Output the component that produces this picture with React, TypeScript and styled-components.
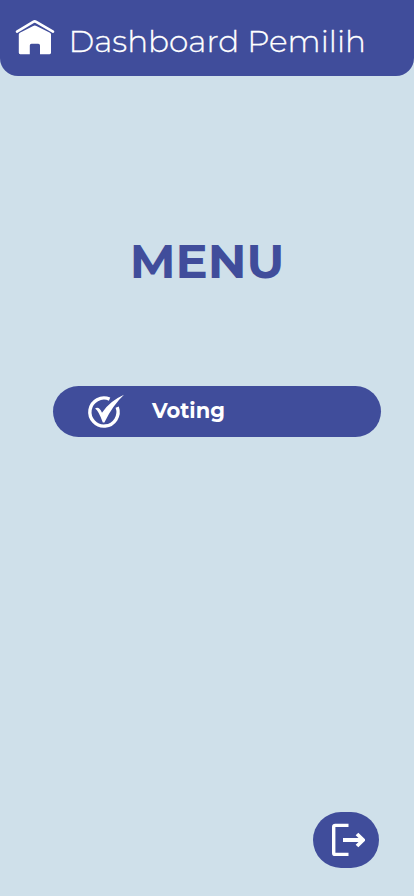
import React from "react";
import styled, { createGlobalStyle } from "styled-components";

const indigo = "#404d9b";
const mist = "#cfe0ea";

const GlobalStyle = createGlobalStyle`
  * { box-sizing: border-box; }
  body { margin: 0; background: ${mist}; font-family: Montserrat, Inter, "Liberation Sans", sans-serif; }
`;

const Screen = styled.main`
  display: flex;
  flex-direction: column;
  height: 896px;
  background: ${mist};
`;

const Header = styled.header`
  display: flex;
  height: 76px;
  padding: 19px 0 0 15px;
  gap: 13.5px;
  border-radius: 0 0 18px 18px;
  background: ${indigo};
  color: #fff;
`;

const HeaderTitle = styled.h1`
  margin: 3px 0 0;
  font-size: 31.1px;
  font-weight: 300;
  line-height: 38px;
  white-space: nowrap;
  -webkit-text-stroke: 0.3px #fff;
`;

const MenuTitle = styled.h2`
  margin: 155px 0 0;
  text-align: center;
  color: ${indigo};
  font-size: 48px;
  font-weight: 700;
  line-height: 60px;
`;

const MenuButton = styled.button`
  display: flex;
  align-items: center;
  width: 328px;
  height: 51px;
  margin: 95px 0 0 53.4px;
  padding: 0 0 0 33.2px;
  gap: 27.4px;
  border: 0;
  border-radius: 26px;
  background: ${indigo};
  color: #fff;
  font-family: inherit;
  font-size: 21px;
  font-weight: 700;
  line-height: 26px;
`;

const MenuLabel = styled.span`
  margin-top: -2px;
`;

const LogoutButton = styled.button`
  display: flex;
  align-items: center;
  justify-content: center;
  width: 66px;
  height: 56px;
  margin: auto 35px 28px auto;
  padding: 0 0 0 4px;
  border: 0;
  border-radius: 28px;
  background: ${indigo};
  color: #fff;
`;

const HomeIcon = () => (
  <svg width="40" height="37" viewBox="0 0 40 37" fill="none">
    <path d="M2 12.6 18.2 2.8Q19.7 1.9 21.2 2.8L38 12.6" stroke="currentColor" strokeWidth="2.6" strokeLinecap="round" />
    <path d="M3.8 15.6Q3.8 14.4 4.9 13.7L18.2 6.9Q19.8 6.1 21.4 6.9L35 13.7Q36 14.3 36 15.6V33.8Q36 35.2 34.6 35.2H25V26.4Q25 24.7 23.3 24.7H16.5Q14.8 24.7 14.8 26.4V35.2H5.2Q3.8 35.2 3.8 33.8Z" fill="currentColor" />
  </svg>
);

const VoteIcon = () => (
  <svg width="38" height="36" viewBox="0 0 38 36" fill="none">
    <path d="M22.6 5.1A14.1 14.1 0 1 0 30.2 13.2" stroke="currentColor" strokeWidth="3.4" />
    <path d="M8.1 14.4Q12.2 12.2 15 18.8Q22.8 7 37 0.8Q26 11 17.4 28.4H15.8Q11.8 17 8.1 14.4Z" fill="currentColor" />
  </svg>
);

const LogoutIcon = () => (
  <svg width="34" height="34" viewBox="0 0 34 34" fill="none" stroke="currentColor">
    <path d="M17.5 2.4H4.2Q2.7 2.4 2.7 3.9V29.9Q2.7 31.4 4.2 31.4H17.5" strokeWidth="3.4" />
    <path d="M12 17H32M26 11 32.2 17 26 23" strokeWidth="3.8" strokeLinejoin="round" />
  </svg>
);

export default function App() {
  return (
    <>
      <GlobalStyle />
      <Screen>
        <Header>
          <HomeIcon />
          <HeaderTitle>Dashboard Pemilih</HeaderTitle>
        </Header>
        <MenuTitle>MENU</MenuTitle>
        <MenuButton>
          <VoteIcon />
          <MenuLabel>Voting</MenuLabel>
        </MenuButton>
        <LogoutButton aria-label="Keluar">
          <LogoutIcon />
        </LogoutButton>
      </Screen>
    </>
  );
}
